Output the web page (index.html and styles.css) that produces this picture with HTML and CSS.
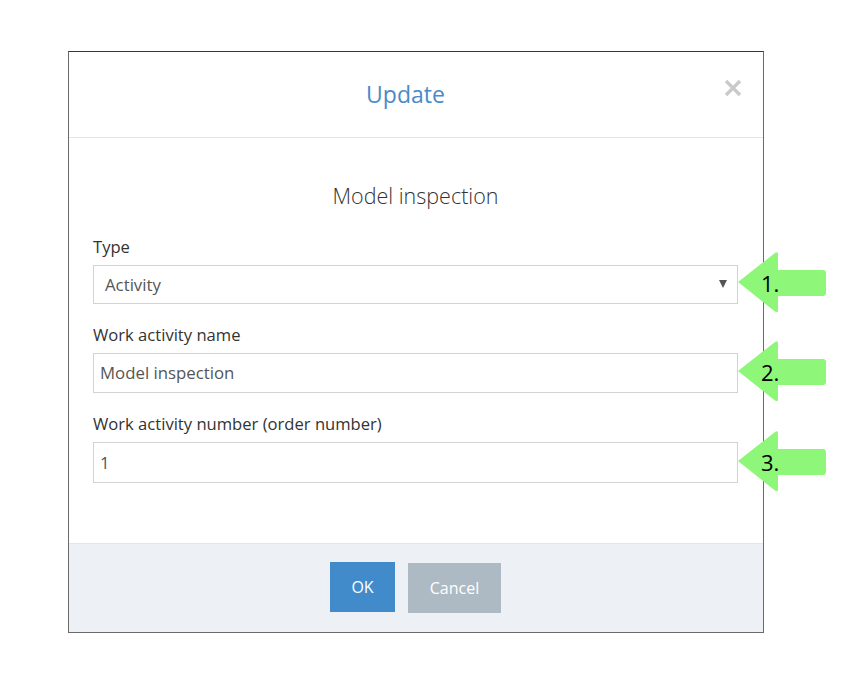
FILE: index.html
```html
<!DOCTYPE html>
<html>
<head>
	<meta charset="utf-8">
	<title>Update</title>
	<link rel="stylesheet" href="styles.css">
</head>
<body>

	<div class="dialog">
		<div class="dialog-header">
			<div class="dialog-title">Update</div>
			<button class="close" type="button" aria-label="Close">
				<svg width="18" height="18" viewBox="0 0 18 18"><path d="M2 2 L16 16 M16 2 L2 16" stroke="#c9c9c9" stroke-width="3.2" stroke-linecap="butt"/></svg>
			</button>
		</div>

		<div class="dialog-body">
			<h2 class="subtitle">Model inspection</h2>

			<div class="field">
				<label for="type">Type</label>
				<div class="select-wrap">
					<select id="type"><option>Activity</option></select>
				</div>
				<!--callout arrow 1-->
				<svg class="callout" width="92" height="64" viewBox="0 0 92 64">
					<path d="M1 31 L38 2 Q41 0 41 3.5 L41 19 L86 19 Q89 19 89 22 L89 42 Q89 45 86 45 L41 45 L41 59 Q41 62.5 38 60.5 Z" fill="#8ef77a"/>
					<text x="24" y="41">1.</text>
				</svg>
			</div>

			<div class="field">
				<label for="name">Work activity name</label>
				<input id="name" type="text" value="Model inspection">
				<svg class="callout" width="92" height="64" viewBox="0 0 92 64">
					<path d="M1 31 L38 2 Q41 0 41 3.5 L41 19 L86 19 Q89 19 89 22 L89 42 Q89 45 86 45 L41 45 L41 59 Q41 62.5 38 60.5 Z" fill="#8ef77a"/>
					<text x="24" y="41">2.</text>
				</svg>
			</div>

			<div class="field">
				<label for="number">Work activity number (order number)</label>
				<input id="number" class="tall" type="text" value="1">
				<svg class="callout" width="92" height="64" viewBox="0 0 92 64">
					<path d="M1 31 L38 2 Q41 0 41 3.5 L41 19 L86 19 Q89 19 89 22 L89 42 Q89 45 86 45 L41 45 L41 59 Q41 62.5 38 60.5 Z" fill="#8ef77a"/>
					<text x="24" y="41">3.</text>
				</svg>
			</div>
		</div>

		<div class="dialog-footer">
			<button class="btn btn-ok" type="button">OK</button>
			<button class="btn btn-cancel" type="button">Cancel</button>
		</div>
	</div>

</body>
</html>
```

FILE: styles.css
```css
body
{
	margin: 0;
	background: #fff;
	font-family: "Open Sans", "Liberation Sans", sans-serif;
	color: #333;
}

.dialog
{
	margin: 51px 0 0 68px;
	width: 694px;
	border: 1px solid #6a6a6a;
	border-top-color: #1f4a1f;
	background: #fff;
}

.dialog-header
{
	display: flex;
	align-items: center;
	height: 85px;
	padding: 0 21px 0 18px;
	border-bottom: 1px solid #e3e3e3;
}

.dialog-title
{
	flex: 1;
	text-align: center;
	font-size: 23px;
	color: #4a8ac8;
	margin-top: -1px;
}

.close
{
	width: 18px;
	height: 18px;
	padding: 0;
	margin-top: -14px;
	border: 0;
	background: none;
	line-height: 0;
}

.dialog-body
{
	padding: 43px 25px 60px 24px;
}

.subtitle
{
	margin: 0 0 25px 0;
	text-align: center;
	font-size: 21.5px;
	font-weight: 300;
	line-height: 30px;
	color: #333;
}

.field
{
	position: relative;
	margin-top: 20px;
}

.field:first-of-type
{
	margin-top: 0;
}

.field label
{
	display: block;
	font-size: 16.6px;
	line-height: 22px;
	margin-bottom: 7px;
	color: #333;
}

.select-wrap
{
	position: relative;
}

.select-wrap::after
{
	content: "";
	position: absolute;
	right: 11px;
	top: 15px;
	border-left: 4px solid transparent;
	border-right: 4px solid transparent;
	border-top: 8px solid #555;
}

select, input[type="text"]
{
	display: block;
	box-sizing: border-box;
	width: 100%;
	height: 40px;
	margin: 0;
	border: 1px solid #d3d3d3;
	border-radius: 0;
	background: #fff;
	font-family: "Open Sans", "Liberation Sans", sans-serif;
	font-size: 16.8px;
	color: #555;
	outline: none;
}

select
{
	-webkit-appearance: none;
	appearance: none;
	height: 39px;
	padding: 0 11px;
}

input[type="text"]
{
	padding: 0 6px 1px 6px;
}

input.tall
{
	height: 41px;
}

.callout
{
	position: absolute;
	right: -91px;
	bottom: -11px;
	overflow: visible;
}

.callout text
{
	font-family: "Open Sans", "Liberation Sans", sans-serif;
	font-size: 22px;
	fill: #000;
}

.dialog-footer
{
	display: flex;
	justify-content: center;
	align-items: flex-start;
	gap: 13px;
	padding: 18px 1px 19px 0;
	border-top: 1px solid #e2e5ea;
	background: #edf1f6;
}

.btn
{
	height: 50px;
	border: 0;
	border-radius: 0;
	color: #fff;
	font-family: "Open Sans", "Liberation Sans", sans-serif;
	font-size: 16px;
}

.btn-ok
{
	width: 65px;
	background: #428bca;
}

.btn-cancel
{
	width: 93px;
	margin-top: 1px;
	background: #adbac3;
}
```
